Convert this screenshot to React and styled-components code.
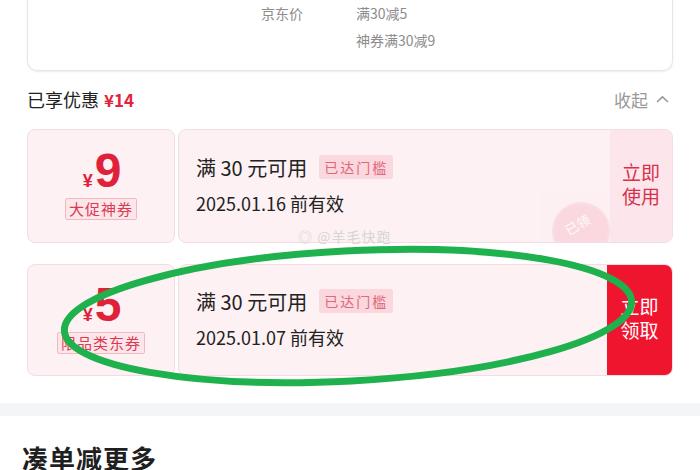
import React from "react";
import styled, { createGlobalStyle } from "styled-components";

const Global = createGlobalStyle`
  html, body { margin: 0; padding: 0; background: #ffffff; }
  body { font-family: "Noto Sans CJK SC", "Noto Sans", sans-serif; overflow: hidden; }
`;

const Page = styled.div`
  position: relative;
  width: 700px;
  height: 470px;
  overflow: hidden;
  background: #ffffff;
`;

const Section = styled.div`
  padding: 0 27px 0 27px;
`;

// 상단 가격 카드
const PriceCard = styled.div`
  height: 72px;
  margin-top: -1px;
  border: 1px solid #e6e6e6;
  border-top: none;
  border-radius: 0 0 10px 10px;
  box-shadow: 0 1px 2px #00000014;
  display: grid;
  grid-template-columns: 233px 95px 1fr;
  grid-auto-rows: 27px;
  align-items: center;
  box-sizing: border-box;
  color: #8c8c8c;
  font-size: 14px;
`;

const Cell = styled.div`
  grid-column: ${(p) => p.col};
  line-height: 1;
`;

const HeadRow = styled.div`
  display: flex;
  justify-content: space-between;
  align-items: center;
  height: 24px;
  margin: 16px 0 18px;
`;

const HeadTitle = styled.div`
  font-size: 18px;
  color: #222;
  display: flex;
  align-items: baseline;
  gap: 5px;
`;

const HeadPrice = styled.span`
  color: #e2233d;
  font-size: 17px;
  font-weight: 700;
`;

const Collapse = styled.div`
  font-size: 17px;
  color: #999;
  display: flex;
  align-items: center;
  gap: 8px;
  padding-right: 4px;
`;

const CouponList = styled.div`
  display: flex;
  flex-direction: column;
  gap: 21px;
`;

const Coupon = styled.div`
  display: flex;
  gap: 3px;
  height: ${(p) => p.h}px;
`;

const LeftPart = styled.div`
  width: 148px;
  box-sizing: border-box;
  background: #fdf1f3;
  border: 1px solid #f3dde1;
  border-radius: 8px;
  display: flex;
  flex-direction: column;
  align-items: center;
  justify-content: center;
  padding-bottom: 4px;
`;

const Amount = styled.div`
  display: flex;
  align-items: baseline;
  color: #e0213a;
  font-family: "Liberation Sans", "Noto Sans", sans-serif;
  font-weight: 700;
  margin-left: 2px;
`;

const Yen = styled.span`
  font-size: 18px;
  margin-right: 2px;
`;

const Big = styled.span`
  font-size: 48px;
  line-height: 46px;
`;

const Tag = styled.div`
  margin-top: 4px;
  padding: 0 3px;
  height: 20px;
  line-height: 20px;
  font-size: 15px;
  letter-spacing: 1px;
  color: #d93a52;
  background: #fde6ea;
  border: 1px solid #f0b9c3;
  border-radius: 2px;
`;

const RightPart = styled.div`
  position: relative;
  flex: 1;
  display: flex;
  box-sizing: border-box;
  background: #fdf1f3;
  border: 1px solid #f3dde1;
  border-radius: 8px;
  overflow: hidden;
`;

const Info = styled.div`
  flex: 1;
  display: flex;
  flex-direction: column;
  justify-content: center;
  padding: 0 0 4px 17px;
  gap: 8px;
`;

const Rule = styled.div`
  display: flex;
  align-items: center;
  gap: 12px;
  font-size: 20px;
  color: #222;
`;

const Reached = styled.span`
  font-size: 14px;
  color: #e0687c;
  background: #fbd7de;
  border-radius: 3px;
  padding: 0 5px;
  height: 24px;
  line-height: 24px;
  letter-spacing: 2px;
`;

const Expire = styled.div`
  font-size: 18px;
  color: #222;
`;

const Action = styled.div`
  width: ${(p) => (p.solid ? 65 : 62)}px;
  display: flex;
  flex-direction: column;
  align-items: center;
  justify-content: center;
  padding-bottom: 4px;
  font-size: 19px;
  color: ${(p) => (p.solid ? "#fff" : "#d63149")};
  background: ${(p) => (p.solid ? "#f0152f" : "#fce6ec")};
`;

const ActionLine = styled.span`
  display: block;
  line-height: 24px;
`;

const Stamp = styled.div`
  position: absolute;
  right: 62px;
  bottom: -18px;
  width: 58px;
  height: 58px;
  border-radius: 50%;
  border: 2px solid #f7dbe0;
  background: #fad3da;
  opacity: 0.8;
  color: #ffffff;
  font-size: 13px;
  display: flex;
  align-items: flex-start;
  justify-content: center;
  padding-top: 10px;
  box-sizing: border-box;
  transform: rotate(-30deg);
`;

const Watermark = styled.div`
  position: absolute;
  left: 298px;
  top: 226px;
  font-size: 14px;
  color: #d6d6d6;
  letter-spacing: 1px;
`;

const Band = styled.div`
  height: 13px;
  background: #f4f5f7;
  margin-top: 27px;
`;

const Footer = styled.div`
  padding: 27px 22px 0;
  font-size: 26px;
  line-height: 30px;
  font-weight: 700;
  color: #1f1f1f;
  letter-spacing: 1px;
`;

const Mark = styled.svg`
  position: absolute;
  left: 0;
  top: 0;
  pointer-events: none;
`;

const ChevronUp = () => (
  <svg width="13" height="8" viewBox="0 0 13 8">
    <path d="M1 7 L6.5 1.8 L12 7" fill="none" stroke="#999" strokeWidth="1.6" />
  </svg>
);

const coupons = [
  { amount: 9, tag: "大促神券", date: "2025.01.16", action: ["立即", "使用"], h: 114, stamp: true },
  { amount: 5, tag: "限品类东券", date: "2025.01.07", action: ["立即", "领取"], h: 112, solid: true },
];

export default function App() {
  return (
    <Page>
      <Global />
      <Section>
        <PriceCard>
          <Cell col={2}>京东价</Cell>
          <Cell col={3}>满30减5</Cell>
          <Cell col={3}>神券满30减9</Cell>
        </PriceCard>
        <HeadRow>
          <HeadTitle>
            已享优惠<HeadPrice>¥14</HeadPrice>
          </HeadTitle>
          <Collapse>
            收起 <ChevronUp />
          </Collapse>
        </HeadRow>
        <CouponList>
          {coupons.map((c) => (
            <Coupon key={c.amount} h={c.h}>
              <LeftPart>
                <Amount>
                  <Yen>¥</Yen>
                  <Big>{c.amount}</Big>
                </Amount>
                <Tag>{c.tag}</Tag>
              </LeftPart>
              <RightPart>
                <Info>
                  <Rule>
                    满 30 元可用<Reached>已达门槛</Reached>
                  </Rule>
                  <Expire>{c.date} 前有效</Expire>
                </Info>
                {c.stamp && <Stamp>已领</Stamp>}
                <Action solid={c.solid}>
                  <ActionLine>{c.action[0]}</ActionLine>
                  <ActionLine>{c.action[1]}</ActionLine>
                </Action>
              </RightPart>
            </Coupon>
          ))}
        </CouponList>
      </Section>
      <Band />
      <Footer>凑单减更多</Footer>
      <Watermark>◎ @羊毛快跑</Watermark>
      <Mark width="700" height="470">
        <ellipse
          cx="348"
          cy="316"
          rx="284"
          ry="65"
          fill="none"
          stroke="#1fb14e"
          strokeWidth="7"
          transform="rotate(-3 348 316)"
        />
      </Mark>
    </Page>
  );
}
